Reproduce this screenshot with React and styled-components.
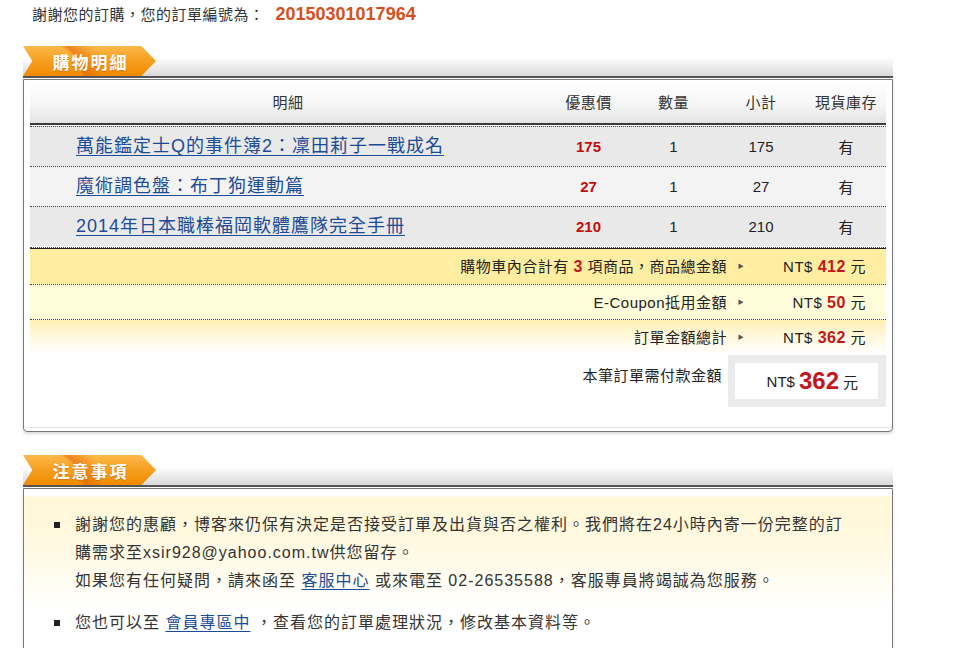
import React from "react";
import styled, { createGlobalStyle } from "styled-components";

const GlobalStyle = createGlobalStyle`
  body {
    margin: 0;
    background: #fff;
    color: #333;
    font-family: "Liberation Sans", Arial, "Noto Sans CJK TC", sans-serif;
  }
`;

const Page = styled.div`
  width: 870px;
  padding: 4px 0 40px 23px;
`;

const Thanks = styled.div`
  padding-left: 9px;
  font-size: 15px;
  line-height: 20px;
  letter-spacing: 0.5px;
  color: #333;
`;

const OrderNo = styled.span`
  margin-left: 11px;
  font-size: 18px;
  font-weight: bold;
  letter-spacing: 0;
  color: #d6501e;
`;

// section heading: orange tab + grey band + double rule
const Head = styled.div`
  display: flex;
  height: 31px;
  margin-top: ${({ $gap }) => $gap}px;
  border-bottom: 2px solid #555;
  background: linear-gradient(to bottom, #fff 0%, #fff 42%, #f1f1f1 62%, #d9d9d9 100%);
`;

const Tab = styled.div`
  width: 133px;
  height: 30px;
  align-self: flex-end;
  display: flex;
  align-items: center;
  justify-content: center;
  padding-left: 2px;
  box-sizing: border-box;
  clip-path: polygon(0 0, 89% 0, 100% 50%, 89% 100%, 0 100%, 7% 50%);
  background:
    radial-gradient(circle at 14% 125%, transparent 34%, rgba(226, 96, 6, 0.55) 37%, transparent 52%),
    linear-gradient(to bottom, #fcb94a 0%, #f7a123 45%, #f08a00 100%);
  color: #fff;
  font-size: 17px;
  font-weight: bold;
  letter-spacing: 2px;
  text-shadow: 0 1px 1px rgba(170, 80, 0, 0.45);
`;

const Frame = styled.div`
  margin-top: 1px;
  border: 1px solid #7a7a7a;
  border-radius: 0 0 4px 4px;
  padding: ${({ $pad }) => $pad};
  box-shadow: inset 0 -3px 0 #fff, inset 0 -4px 0 #e2e2e2, 0 2px 3px #dcdcdc;
`;

const cols = "516px 85px 85px 90px 1fr";

const HeadRow = styled.div`
  display: grid;
  grid-template-columns: ${cols};
  align-items: center;
  height: 43px;
  border-bottom: 2px solid #3c3c3c;
  background: linear-gradient(to bottom, #fff 0%, #f6f6f6 55%, #e3e3e3 100%);
  font-size: 15px;
  letter-spacing: 0.5px;
  color: #333;
  text-align: center;
`;

const Items = styled.div`
  padding: 1px 0;
  border-bottom: 1px dotted #444;
`;

const ItemRow = styled.div`
  display: grid;
  grid-template-columns: ${cols};
  align-items: center;
  height: 39px;
  border-top: 1px dotted #444;
  background: ${({ $alt }) => ($alt ? "#f3f3f3" : "#e9e9e9")};
  font-size: 15px;
  color: #222;
  text-align: center;
`;

const TitleCell = styled.div`
  text-align: left;
  padding: 0 0 5px 46px;
`;

const TitleLink = styled.a`
  font-size: 18px;
  letter-spacing: 1px;
  color: #1c4c96;
  text-decoration: underline;
  text-underline-offset: 3px;
`;

const Price = styled.div`
  font-weight: bold;
  color: #c40c0c;
`;

const Summary = styled.div`
  border-top: 1px solid #222;
`;

const SumRow = styled.div`
  display: grid;
  grid-template-columns: 1fr 28px 131px;
  align-items: center;
  height: 35px;
  padding-bottom: 2px;
  box-sizing: border-box;
  border-top: ${({ $first }) => ($first ? "none" : "1px dotted #444")};
  background: ${({ $bg }) => $bg};
  font-size: 15px;
  letter-spacing: 0.5px;
  color: #222;
`;

const SumLabel = styled.div`
  text-align: right;
`;

const Arrow = styled.div`
  text-align: center;
  font-size: 6px;
  color: #555;
`;

const Amount = styled.div`
  text-align: right;
  padding-right: 20px;
`;

const Red = styled.b`
  color: #c4161c;
  font-size: ${({ $size }) => $size || 16}px;
`;

const PayRow = styled.div`
  display: grid;
  grid-template-columns: 1fr 158px;
  margin-top: 1px;
`;

const PayLabel = styled.div`
  padding: 11px 6px 0 0;
  text-align: right;
  font-size: 15px;
  line-height: 20px;
  letter-spacing: 0.5px;
  color: #222;
`;

const PayBox = styled.div`
  background: #ebebeb;
  padding: 8px 8px 8px 7px;
`;

const PayInner = styled.div`
  height: 36px;
  background: #fff;
  display: flex;
  align-items: center;
  justify-content: flex-end;
  padding-right: 20px;
  font-size: 15px;
  color: #222;
  gap: 4px;
`;

const Notes = styled.div`
  padding: 22px 40px 40px 30px;
  background: linear-gradient(
    to bottom,
    #fff 0,
    #fff 7px,
    #fff7d6 8px,
    #fffae6 70px,
    #fffdf6 100px,
    #fff 118px
  );
`;

const Note = styled.div`
  display: flex;
  align-items: flex-start;
  margin-bottom: 14px;
`;

const Bullet = styled.span`
  flex: none;
  width: 6px;
  height: 6px;
  margin: 11px 15px 0 0;
  background: #222;
`;

const NoteText = styled.div`
  max-width: 782px;
  font-size: 16px;
  line-height: 28px;
  letter-spacing: 1px;
  color: #333;
`;

const NoteLink = styled.a`
  color: #1c4c96;
  text-decoration: underline;
  text-underline-offset: 3px;
`;

const items = [
  { title: "萬能鑑定士Q的事件簿2：凜田莉子一戰成名", price: 175, qty: 1 },
  { title: "魔術調色盤：布丁狗運動篇", price: 27, qty: 1 },
  { title: "2014年日本職棒福岡軟體鷹隊完全手冊", price: 210, qty: 1 },
];

const Section = ({ title, gap, pad, children }) => (
  <>
    <Head $gap={gap}>
      <Tab>{title}</Tab>
    </Head>
    <Frame $pad={pad}>{children}</Frame>
  </>
);

export default function App() {
  return (
    <Page>
      <GlobalStyle />
      <Thanks>
        謝謝您的訂購，您的訂單編號為：<OrderNo>20150301017964</OrderNo>
      </Thanks>

      <Section title="購物明細" gap={20} pad="0 6px 24px">
        <HeadRow>
          <div>明細</div>
          <div>優惠價</div>
          <div>數量</div>
          <div>小計</div>
          <div>現貨庫存</div>
        </HeadRow>
        <Items>
          {items.map((it, i) => (
            <ItemRow key={it.title} $alt={i % 2 === 1}>
              <TitleCell>
                <TitleLink href="#">{it.title}</TitleLink>
              </TitleCell>
              <Price>{it.price}</Price>
              <div>{it.qty}</div>
              <div>{it.price * it.qty}</div>
              <div>有</div>
            </ItemRow>
          ))}
        </Items>
        <Summary>
          <SumRow $first $bg="#ffeea2">
            <SumLabel>
              購物車內合計有 <Red>3</Red> 項商品，商品總金額
            </SumLabel>
            <Arrow>▶</Arrow>
            <Amount>
              NT$ <Red>412</Red> 元
            </Amount>
          </SumRow>
          <SumRow $bg="#fffcd9">
            <SumLabel>E-Coupon抵用金額</SumLabel>
            <Arrow>▶</Arrow>
            <Amount>
              NT$ <Red>50</Red> 元
            </Amount>
          </SumRow>
          <SumRow $bg="linear-gradient(to bottom, #fff0b2 0%, #fff8db 45%, #fff 100%)">
            <SumLabel>訂單金額總計</SumLabel>
            <Arrow>▶</Arrow>
            <Amount>
              NT$ <Red>362</Red> 元
            </Amount>
          </SumRow>
        </Summary>
        <PayRow>
          <PayLabel>本筆訂單需付款金額</PayLabel>
          <PayBox>
            <PayInner>
              NT$ <Red $size={24}>362</Red> 元
            </PayInner>
          </PayBox>
        </PayRow>
      </Section>

      <Section title="注意事項" gap={22} pad="0">
        <Notes>
          <Note>
            <Bullet />
            <NoteText>
              謝謝您的惠顧，博客來仍保有決定是否接受訂單及出貨與否之權利。我們將在24小時內寄一份完整的訂購需求至xsir928@yahoo.com.tw供您留存。
              <br />
              如果您有任何疑問，請來函至 <NoteLink href="#">客服中心</NoteLink> 或來電至
              02-26535588，客服專員將竭誠為您服務。
            </NoteText>
          </Note>
          <Note>
            <Bullet />
            <NoteText>
              您也可以至 <NoteLink href="#">會員專區中</NoteLink> ，查看您的訂單處理狀況，修改基本資料等。
            </NoteText>
          </Note>
        </Notes>
      </Section>
    </Page>
  );
}
